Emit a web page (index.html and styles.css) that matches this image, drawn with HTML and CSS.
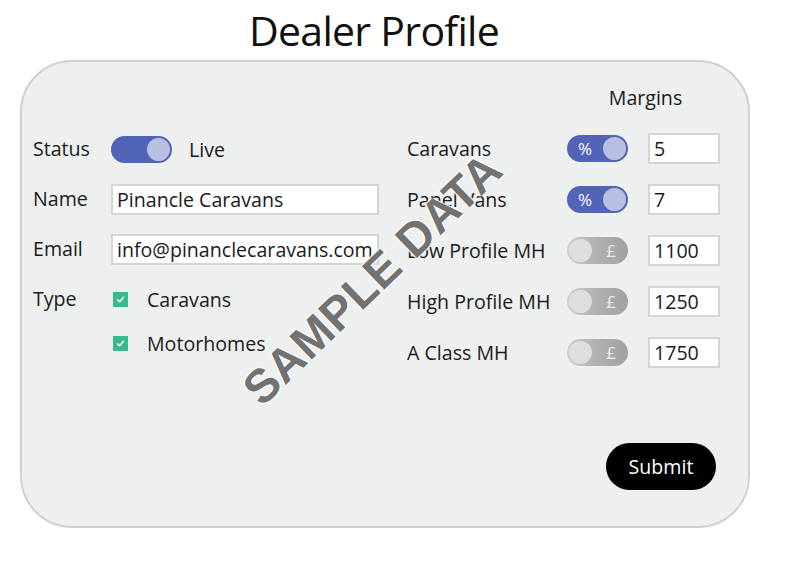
FILE: index.html
```html
<!DOCTYPE html>
<html lang="en">
<head>
<meta charset="utf-8">
<title>Dealer Profile</title>
<link rel="stylesheet" href="styles.css">
</head>
<body>
<h1 class="title">Dealer Profile</h1>
<div class="card">
  <div class="col-left">
    <div class="row">
      <span class="label">Status</span>
      <span class="toggle on"><span class="knob"></span></span>
      <span class="live">Live</span>
    </div>
    <div class="row">
      <span class="label">Name</span>
      <span class="input wide">Pinancle Caravans</span>
    </div>
    <div class="row">
      <span class="label">Email</span>
      <span class="input wide">info@pinanclecaravans.com</span>
    </div>
    <div class="row top">
      <span class="label">Type</span>
      <div class="checks">
        <div class="check-item"><span class="checkbox"><svg viewBox="0 0 15 15" width="15" height="15"><path d="M4.5 7.8 L6.6 9.8 L10.5 5.3" fill="none" stroke="#fff" stroke-width="1.4" stroke-linecap="round" stroke-linejoin="round"/></svg></span>Caravans</div>
        <div class="check-item"><span class="checkbox"><svg viewBox="0 0 15 15" width="15" height="15"><path d="M4.5 7.8 L6.6 9.8 L10.5 5.3" fill="none" stroke="#fff" stroke-width="1.4" stroke-linecap="round" stroke-linejoin="round"/></svg></span>Motorhomes</div>
      </div>
    </div>
  </div>
  <div class="col-right">
    <div class="margins-head"><span>Margins</span></div>
    <div class="rows">
      <div class="row">
        <span class="rlabel">Caravans</span>
        <span class="toggle on pct"><span class="sym">%</span><span class="knob"></span></span>
        <span class="input num">5</span>
      </div>
      <div class="row">
        <span class="rlabel">Panel Vans</span>
        <span class="toggle on pct"><span class="sym">%</span><span class="knob"></span></span>
        <span class="input num">7</span>
      </div>
      <div class="row">
        <span class="rlabel">Low Profile MH</span>
        <span class="toggle off"><span class="knob"></span><span class="sym">£</span></span>
        <span class="input num">1100</span>
      </div>
      <div class="row">
        <span class="rlabel">High Profile MH</span>
        <span class="toggle off"><span class="knob"></span><span class="sym">£</span></span>
        <span class="input num">1250</span>
      </div>
      <div class="row">
        <span class="rlabel">A Class MH</span>
        <span class="toggle off"><span class="knob"></span><span class="sym">£</span></span>
        <span class="input num">1750</span>
      </div>
    </div>
    <div class="actions"><button class="submit">Submit</button></div>
  </div>
  <div class="watermark">SAMPLE DATA</div>
</div>
</body>
</html>
```

FILE: styles.css
```css
* { box-sizing: border-box; }
html, body { margin: 0; padding: 0; background: #ffffff; }
body {
  width: 792px;
  height: 568px;
  font-family: "Open Sans", "Noto Sans", sans-serif;
  color: #1b1b1b;
  overflow: hidden;
}
.title {
  margin: 0;
  padding-top: 6px;
  height: 60px;
  width: 748px;
  text-align: center;
  font-weight: 400;
  font-size: 41px;
  line-height: 48px;
  letter-spacing: -0.7px;
  color: #111;
}
.card {
  position: relative;
  margin-left: 20px;
  width: 730px;
  height: 468px;
  background: #eeefef;
  border: 2px solid #cfd0d0;
  border-radius: 52px;
  display: flex;
  padding: 24px 0 36px 11px;
  font-size: 19.6px;
}
.col-left {
  width: 374px;
  padding-top: 47px;
  display: flex;
  flex-direction: column;
  gap: 18px;
}
.row {
  display: flex;
  align-items: center;
  height: 32px;
}
.row.top { align-items: flex-start; height: auto; }
.label { width: 78px; line-height: 32px; }
.live { margin-left: 17px; }
.input {
  display: flex;
  align-items: center;
  height: 31px;
  background: #fff;
  border: 2px solid #d4d5d5;
  padding: 0 4px;
  white-space: nowrap;
  overflow: hidden;
}
.input.wide { width: 268px; }
.input.num { width: 72px; }
.checks { display: flex; flex-direction: column; gap: 12px; }
.check-item {
  display: flex;
  align-items: center;
  height: 32px;
  padding-left: 2px;
}
.checkbox {
  width: 15px;
  height: 15px;
  background: #3cb98b;
  margin-right: 19px;
  display: inline-flex;
}
.toggle {
  position: relative;
  display: inline-flex;
  align-items: center;
  width: 61px;
  height: 27px;
  border-radius: 14px;
  padding: 0 2px;
  flex-shrink: 0;
}
.toggle .knob {
  width: 23px;
  height: 23px;
  border-radius: 50%;
}
.toggle.on { background: #5264b8; justify-content: flex-end; }
.toggle.on .knob { background: #b9bfdf; }
.toggle.pct { justify-content: space-between; padding-left: 11px; }
.toggle .sym { color: #fff; font-size: 17px; line-height: 1; }
.toggle.off {
  background: linear-gradient(90deg, #cfcfcf 0%, #b4b4b4 40%, #a0a0a0 100%);
  justify-content: space-between;
  padding-right: 12px;
}
.toggle.off .knob { background: #dedede; }
.toggle.off .sym { color: #ececec; }
.col-right {
  width: 330px;
  display: flex;
  flex-direction: column;
}
.margins-head {
  height: 24px;
  padding-left: 160px;
  display: flex;
  justify-content: center;
  width: 313px;
  line-height: 24px;
}
.margins-head span { padding-left: 4px; }
.rows {
  margin-top: 22px;
  display: flex;
  flex-direction: column;
  gap: 19px;
}
.rlabel { width: 160px; white-space: nowrap; }
.toggle + .input { margin-left: 20px; }
.actions {
  margin-top: auto;
  display: flex;
  justify-content: flex-end;
  width: 309px;
}
.submit {
  width: 110px;
  height: 47px;
  border-radius: 24px;
  background: #000;
  color: #fff;
  border: none;
  font-family: inherit;
  font-size: 19.6px;
}
.watermark {
  position: absolute;
  left: 160px;
  top: 189px;
  width: 380px;
  text-align: center;
  transform: rotate(-44deg);
  font-family: "Liberation Sans", Arial, sans-serif;
  font-weight: 700;
  font-size: 47px;
  letter-spacing: 0.5px;
  color: #727272;
  text-shadow: 0 0 2px #fff, 0 0 2px #fff, 1px 1px 1px #fff, -1px -1px 1px #fff;
  pointer-events: none;
}
```
